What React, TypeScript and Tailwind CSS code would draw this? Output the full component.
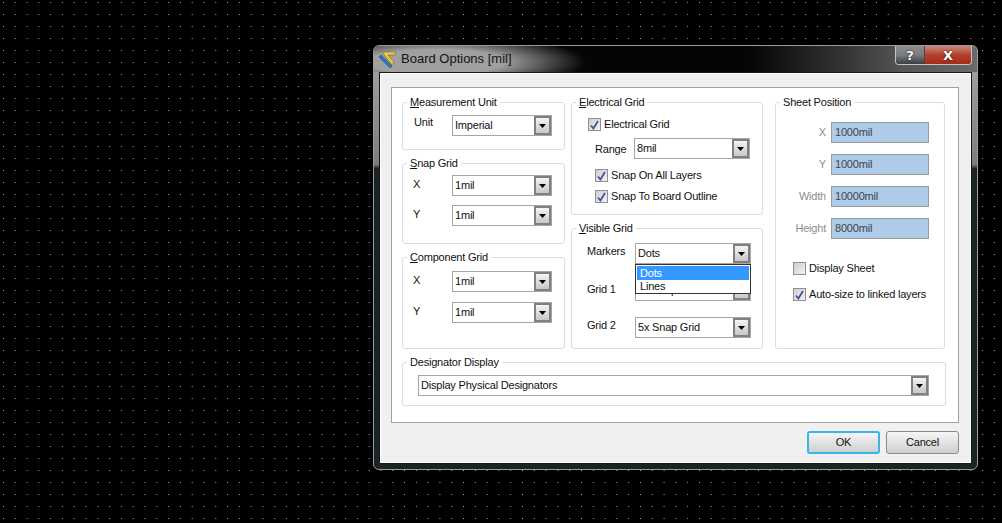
import type { ReactNode } from 'react';

/* little down-arrow button on the right of every combo */
function Combo({ value, className }: { value: string; className: string }) {
  return (
    <div className={`flex h-[21px] items-stretch border border-[#a5a5a5] bg-white ${className}`}>
      <span className="flex-1 truncate pl-[2px] leading-[19px]">{value}</span>
      <span className="flex w-[17px] items-center justify-center border-2 border-[#808080] bg-gradient-to-b from-[#f4f4f4] to-[#c8c8c8]">
        <svg width="7" height="4" viewBox="0 0 7 4">
          <path d="M0 0h7L3.5 4z" fill="#000" />
        </svg>
      </span>
    </div>
  );
}

function Check({ label, checked, className }: { label: string; checked?: boolean; className?: string }) {
  return (
    <div className={`flex h-[13px] items-center gap-[3px] ${className ?? ''}`}>
      <span className="flex h-[13px] w-[13px] items-center justify-center border border-[#8e8f8f] bg-gradient-to-br from-[#cfcfcf] to-[#f2f2f2]">
        {checked && (
          <svg width="9" height="10" viewBox="0 0 9 10">
            <path d="M1 5.5 3.4 8.5 8 1" fill="none" stroke="#3c4f9e" strokeWidth="1.7" />
          </svg>
        )}
      </span>
      <span className="whitespace-nowrap leading-[13px]">{label}</span>
    </div>
  );
}

function Group({ title, hot, className, children }: { title: string; hot?: string; className: string; children: ReactNode }) {
  return (
    <div className={`relative rounded-[3px] border border-[#d5dfe5] ${className}`}>
      <span className="absolute left-[4px] top-[-8px] whitespace-nowrap bg-white px-[3px] leading-[14px]">
        {hot && <span className="underline">{hot}</span>}
        {hot ? title.slice(hot.length) : title}
      </span>
      {children}
    </div>
  );
}

function Row({ label, value, labelClass, comboClass, className }: { label: string; value: string; labelClass: string; comboClass: string; className?: string }) {
  return (
    <div className={`flex items-start ${className ?? ''}`}>
      <span className={`leading-[14px] ${labelClass}`}>{label}</span>
      <Combo value={value} className={comboClass} />
    </div>
  );
}

function SheetField({ label, value, className }: { label: string; value: string; className?: string }) {
  return (
    <div className={`flex h-[21px] items-center ${className ?? ''}`}>
      <span className="w-[49px] pr-[5px] text-right text-[#8c8c8c]">{label}</span>
      <span className="h-[21px] w-[98px] border border-[#9b9b9b] bg-[#aecbea] pl-[3px] leading-[19px] text-[#444]">{value}</span>
    </div>
  );
}

export default function App() {
  return (
    <div className="relative h-[523px] w-[1002px] overflow-hidden bg-black bg-[radial-gradient(circle_at_3.5px_2.5px,#a8a8a8_0.6px,transparent_0.6px)] bg-[length:11.8px_12px] font-['Liberation_Sans',sans-serif] text-[11px] tracking-[-0.2px] text-[#111]">
      {/* dialog */}
      <div className="absolute left-[373px] top-[45px] flex h-[425px] w-[605px] flex-col overflow-hidden rounded-[6px] border border-[#9a9a9a] bg-gradient-to-b from-[#a8a8a8] via-[#7c7c7c] via-[28%] to-[#1c2326] to-[29%] p-[5px] pt-0">
        <div className="relative -mx-[5px] flex h-[26px] shrink-0 items-center bg-[radial-gradient(ellipse_150px_28px_at_62px_16px,#a0a0a0_45%,transparent_100%),linear-gradient(90deg,#050505_0,#050505_62%,#2e2e2e_76%,#565656_88%,#6a6a6a_100%)] pl-[5px]">
          <svg width="19" height="19" viewBox="0 0 19 19" className="shrink-0">
            <path d="M3 2h14l-1 3H9l6 7-2 3z" fill="#e8c94a" stroke="#7a6420" strokeWidth=".6" />
            <path d="M2 5l11 11-2 2L0 7z" fill="#2f78c4" stroke="#1a3f70" strokeWidth=".6" />
          </svg>
          <span className="ml-[3px] text-[13px] tracking-normal text-[#10131a]">Board Options [mil]</span>
          <div className="absolute right-[5px] top-0 flex h-[19px] overflow-hidden rounded-b-[4px] border border-t-0 border-[#c4c4c4]">
            <span className="flex w-[29px] items-center justify-center border-r border-[#444] bg-gradient-to-b from-[#8d8d8d] via-[#7c7c7c] to-[#3a3f42] font-['DejaVu_Sans',sans-serif] text-[13px] font-bold leading-none text-white [text-shadow:0_0_2px_#000]">?</span>
            <span className="flex w-[46px] items-center justify-center bg-gradient-to-b from-[#c9877a] via-[#b4402c] to-[#a52a18] font-['DejaVu_Sans',sans-serif] text-[13px] font-bold leading-none text-white [text-shadow:0_0_2px_#000]">X</span>
          </div>
        </div>

        {/* client area */}
        <div className="flex flex-1 flex-col border border-[#15191b] bg-[#f0f0f0] pl-[11px] pr-[12px] pt-[14px] shadow-[inset_0_0_0_1px_#fff]">
          <div className="h-[336px] border border-[#a0a0a0] bg-white pl-[10px] pr-[12px] pt-[14px]">
            <div className="flex">
              <div className="flex w-[163px] flex-col">
                <Group title="Measurement Unit" hot="M" className="h-[48px] pl-[10px] pr-[12px] pt-[12px]">
                  <Row label="Unit" value="Imperial" labelClass="w-[39px] pl-[1px]" comboClass="w-[100px]" />
                </Group>
                <Group title="Snap Grid" hot="S" className="mt-[13px] h-[81px] pl-[10px] pr-[12px] pt-[11px]">
                  <Row label="X" value="1mil" labelClass="w-[39px] pt-[2px]" comboClass="w-[100px]" />
                  <Row label="Y" value="1mil" labelClass="w-[39px] pt-[2px]" comboClass="w-[100px]" className="mt-[9px]" />
                </Group>
                <Group title="Component Grid" hot="C" className="mt-[13px] h-[92px] pl-[10px] pr-[12px] pt-[13px]">
                  <Row label="X" value="1mil" labelClass="w-[39px] pt-[2px]" comboClass="w-[100px]" />
                  <Row label="Y" value="1mil" labelClass="w-[39px] pt-[2px]" comboClass="w-[100px]" className="mt-[10px]" />
                </Group>
              </div>

              <div className="ml-[6px] flex w-[192px] flex-col">
                <Group title="Electrical Grid" hot="E" className="h-[113px] pl-[16px] pr-[11px] pt-[15px]">
                  <Check label="Electrical Grid" checked />
                  <Row label="Range" value="8mil" labelClass="w-[39px] pl-[9px] pt-[4px] box-content" comboClass="w-[116px]" className="mt-[7px] -ml-[2px]" />
                  <Check label="Snap On All Layers" checked className="ml-[7px] mt-[10px]" />
                  <Check label="Snap To Board Outline" checked className="ml-[7px] mt-[8px]" />
                </Group>
                <Group title="Visible Grid" hot="V" className="relative mt-[13px] h-[121px] pl-[15px] pr-[11px] pt-[14px]">
                  <Row label="Markers" value="Dots" labelClass="w-[48px] pt-[1px]" comboClass="w-[116px]" />
                  <Row label="Grid 1" value="5x Snap Grid" labelClass="w-[48px] pt-[2px]" comboClass="w-[116px]" className="mt-[16px]" />
                  <Row label="Grid 2" value="5x Snap Grid" labelClass="w-[48px] pt-[1px]" comboClass="w-[116px]" className="mt-[16px]" />
                  {/* open combo list */}
                  <div className="absolute left-[63px] top-[35px] h-[30px] w-[116px] border border-[#333] bg-white">
                    <div className="mx-[1px] mt-[1px] h-[14px] bg-[#3399ff] pl-[3px] leading-[14px] text-white">Dots</div>
                    <div className="pl-[4px] leading-[13px]">Lines</div>
                  </div>
                </Group>
              </div>

              <Group title="Sheet Position" className="ml-[12px] h-[247px] w-[170px] pt-[19px]">
                <SheetField label="X" value="1000mil" className="ml-[6px]" />
                <SheetField label="Y" value="1000mil" className="ml-[6px] mt-[11px]" />
                <SheetField label="Width" value="10000mil" className="ml-[6px] mt-[11px]" />
                <SheetField label="Height" value="8000mil" className="ml-[6px] mt-[11px]" />
                <Check label="Display Sheet" className="ml-[17px] mt-[23px]" />
                <Check label="Auto-size to linked layers" checked className="ml-[17px] mt-[13px]" />
              </Group>
            </div>

            <Group title="Designator Display" className="mt-[13px] h-[44px] pl-[15px] pr-[15px] pt-[12px]">
              <Combo value="Display Physical Designators" className="w-[511px]" />
            </Group>
          </div>

          <div className="mt-[8px] flex justify-end gap-[6px]">
            <button className="h-[23px] w-[73px] rounded-[3px] border-2 border-[#3db4e6] bg-gradient-to-b from-[#f6f6f6] to-[#cfcfcf] text-[11px] leading-none">OK</button>
            <button className="h-[23px] w-[73px] rounded-[3px] border border-[#8a8a8a] bg-gradient-to-b from-[#f6f6f6] to-[#cfcfcf] text-[11px] leading-none">Cancel</button>
          </div>
        </div>
      </div>
    </div>
  );
}
